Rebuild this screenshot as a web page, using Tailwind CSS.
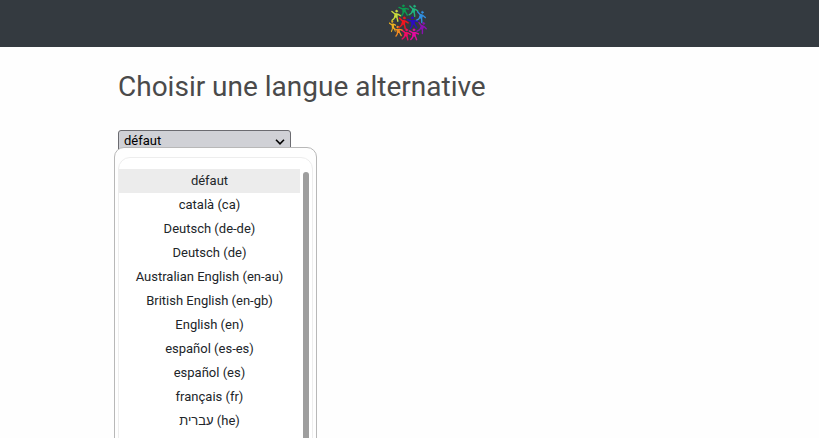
<!DOCTYPE html>
<html lang="fr">
<head>
<meta charset="utf-8">
<meta name="viewport" content="width=device-width, initial-scale=1">
<title>Choisir une langue alternative</title>
<script src="https://cdn.jsdelivr.net/npm/@tailwindcss/browser@4"></script>
</head>
<body class="h-screen overflow-hidden bg-[#fefefe] font-[Roboto,'Noto_Sans',sans-serif] text-[#212529]">
<header class="flex h-[47px] justify-center bg-[#343a40] pt-1 pr-1">
  <a href="#" aria-label="Accueil" class="block h-[38px] w-[38px]">
    <svg viewBox="0 0 38 38" class="h-full w-full" fill="none" stroke-width="1.4" stroke-linecap="round" stroke-linejoin="round">
      <defs>
        <g id="person">
          <circle cx="0" cy="-4.4" r="1.1" fill="currentColor" stroke="currentColor" stroke-width=".4"/>
          <path d="M-4.6-3.4L-1.5-1.6H1.5L4.4-.4M-.8 1L-1.5 3.2L-3.2 5.2M.8 1L1.8 3.2L2.6 5.4" stroke="currentColor"/>
          <path d="M-1-1.2H1V1.4H-1Z" fill="currentColor" stroke="currentColor"/>
        </g>
      </defs>
      <use href="#person" color="#c9dc3c" transform="translate(7 11.5) rotate(8)"/>
      <use href="#person" color="#0c9a50" transform="translate(15 6.2) rotate(-8)"/>
      <use href="#person" color="#20b57d" transform="translate(24.5 6.5) rotate(14)"/>
      <use href="#person" color="#318fe0" transform="translate(32 12.5) rotate(18)"/>
      <use href="#person" color="#8a12b0" transform="translate(33 23.5) rotate(22)"/>
      <use href="#person" color="#e40aa0" transform="translate(25 30.3)"/>
      <use href="#person" color="#f00b66" transform="translate(17 30.2) rotate(8)"/>
      <use href="#person" color="#f38b20" transform="translate(9.2 27) rotate(-8) scale(.92)"/>
      <use href="#person" color="#eeb320" transform="translate(3.8 22) rotate(-8) scale(.66 1)"/>
      <use href="#person" color="#ee1620" transform="translate(14.5 18.5) rotate(10) scale(1.05)"/>
      <use href="#person" color="#2b0cc4" transform="translate(24 18.5) rotate(-8) scale(1.05)"/>
    </svg>
  </a>
</header>
<main class="px-[118px] pt-5">
  <h1 class="text-[28px] leading-10 text-[#4a4a4a]"><label for="language">Choisir une langue alternative</label></h1>
  <div class="relative mt-[23px] w-[173px]">
    <select id="language" class="block h-[22px] w-full appearance-none rounded-[3px] border border-[#6b6b70] bg-[#d0d1d6] px-[5px] text-[13px] text-black">
      <option>défaut</option><option>català (ca)</option><option>Deutsch (de-de)</option><option>Deutsch (de)</option><option>Australian English (en-au)</option><option>British English (en-gb)</option><option>English (en)</option><option>español (es-es)</option><option>español (es)</option><option>français (fr)</option><option>עברית (he)</option>
    </select>
    <svg viewBox="0 0 10 6" class="pointer-events-none absolute top-[9px] right-[6px] h-[6px] w-[10px]" fill="none" stroke="#000" stroke-width="1.6"><path d="M1 .8L5 4.8L9 .8"/></svg>
    <div class="absolute top-[17px] -left-1 w-[203px] rounded-t-[10px] border border-[#b8b8b8] bg-[#fefefe] px-[3px] pt-[9px]">
      <div class="flex rounded-t-[12px] border border-[#ededed] bg-white pt-[11px]">
        <ul role="listbox" aria-label="Langue" class="grow pb-6 text-center text-[13px] leading-6">
          <li role="option" aria-selected="true" class="h-6 bg-[#ececec]">défaut</li>
          <li role="option" class="h-6">català (ca)</li>
          <li role="option" class="h-6">Deutsch (de-de)</li>
          <li role="option" class="h-6">Deutsch (de)</li>
          <li role="option" class="h-6">Australian English (en-au)</li>
          <li role="option" class="h-6">British English (en-gb)</li>
          <li role="option" class="h-6">English (en)</li>
          <li role="option" class="h-6">español (es-es)</li>
          <li role="option" class="h-6">español (es)</li>
          <li role="option" class="h-6">français (fr)</li>
          <li role="option" class="h-6">עברית (he)</li>
        </ul>
        <div class="mx-[3px] mt-[3px] w-[6px] shrink-0 rounded-t-full bg-[#9e9e9e]"></div>
      </div>
    </div>
  </div>
</main>
</body>
</html>
